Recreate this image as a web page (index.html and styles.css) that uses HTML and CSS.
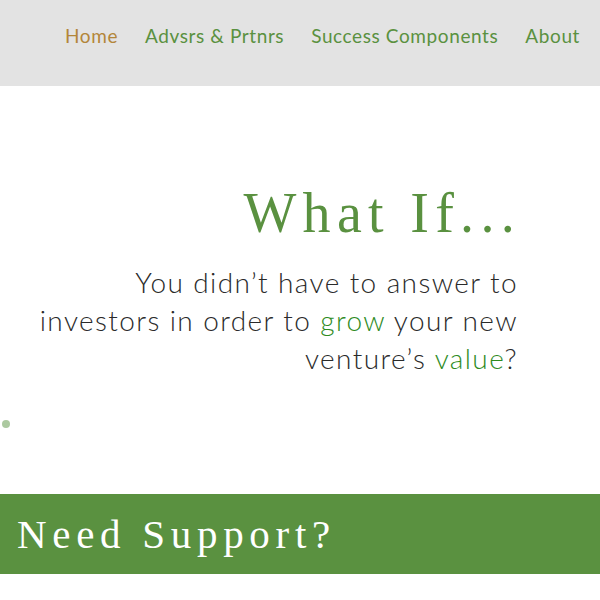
FILE: index.html
```html
<!DOCTYPE html>
<html lang="en">
<head>
  <meta charset="UTF-8">
  <meta name="viewport" content="width=device-width, initial-scale=1.0">
  <title>What If</title>
  <link rel="stylesheet" href="styles.css">
</head>
<body>

  <header class="topbar">
    <nav class="menu">
      <a class="menu-link active" href="#">Home</a>
      <a class="menu-link" href="#">Advsrs &amp; Prtnrs</a>
      <a class="menu-link" href="#">Success Components</a>
      <a class="menu-link" href="#">About</a>
    </nav>
  </header>

  <!-- hero -->
  <section class="hero">
    <h1 class="hero-title">What If...</h1>
    <p class="hero-text">You didn’t have to answer to investors in order to <span class="hl">grow</span> your new venture’s <span class="hl">value</span>?</p>
  </section>

  <div class="dots">
    <span class="dot"></span>
  </div>

  <!-- support band -->
  <section class="band">
    <h2 class="band-title">Need Support?</h2>
  </section>

</body>
</html>
```

FILE: styles.css
```css
body {
  margin: 0;
  font-family: Lato, sans-serif;
  background: #fff;
}
.topbar {
  background-color: #e3e3e3;
  height: 86px;
}
.menu {
  display: flex;
  justify-content: flex-end;
  gap: 27px;
  padding: 23px 20px 0 0;
}
.menu-link {
  font-size: 19px;
  letter-spacing: 0.6px;
  color: #5a9140;
  text-decoration: none;
  line-height: 26px;
}
.menu-link.active {
  color: #b3863a;
}
.hero {
  padding: 97px 82px 0 30px;
  text-align: right;
}
.hero-title {
  margin: 0 -3px 0 0;
  font-family: "Liberation Serif", serif;
  font-weight: normal;
  font-size: 56px;
  letter-spacing: 6.3px;
  color: #5a9140;
  line-height: 60px;
}
.hero-text {
  margin: 20px 0 0 auto;
  max-width: 490px;
  font-weight: 300;
  font-size: 28px;
  letter-spacing: 1.4px;
  line-height: 38px;
  color: #2a2a2a;
}
.hl {
  color: #2e8b1e;
}
.dots {
  box-sizing: border-box;
  height: 117px;
  padding: 43px 0 0 2px;
}
.dot {
  display: block;
  width: 8px;
  height: 8px;
  border-radius: 50%;
  background: #acc9a0;
}
.band {
  background-color: #5a9140;
  height: 80px;
  display: flex;
  align-items: center;
  padding-left: 17px;
}
.band-title {
  margin: 0;
  font-family: "Liberation Serif", serif;
  font-weight: normal;
  font-size: 41px;
  letter-spacing: 5.7px;
  color: #fff;
}
```
